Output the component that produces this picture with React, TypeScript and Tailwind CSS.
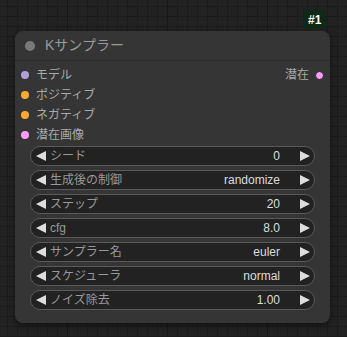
import React from 'react';

type Slot = { label: string; color: string };

const inputs: Slot[] = [
  { label: 'モデル', color: 'bg-[#b39ddb]' },
  { label: 'ポジティブ', color: 'bg-[#ffa931]' },
  { label: 'ネガティブ', color: 'bg-[#ffa931]' },
  { label: '潜在画像', color: 'bg-[#ff9cf9]' },
];

const widgets = [
  { name: 'シード', value: '0' },
  { name: '生成後の制御', value: 'randomize' },
  { name: 'ステップ', value: '20' },
  { name: 'cfg', value: '8.0' },
  { name: 'サンプラー名', value: 'euler' },
  { name: 'スケジューラ', value: 'normal' },
  { name: 'ノイズ除去', value: '1.00' },
];

function Arrow({ dir }: { dir: 'left' | 'right' }) {
  return (
    <svg width="10" height="10" viewBox="0 0 10 10" className="shrink-0">
      <path d={dir === 'left' ? 'M10 0 L10 10 L0 5 Z' : 'M0 0 L0 10 L10 5 Z'} fill="#dddddd" />
    </svg>
  );
}

function Widget({ name, value }: { name: string; value: string }) {
  return (
    <div className="flex items-center h-[20px] rounded-full bg-[#222222] border border-[#5a5a5a] pl-[5px] pr-[4px] text-[12px]">
      <Arrow dir="left" />
      <span className="ml-[4px] text-[#999999]">{name}</span>
      <span className="ml-auto text-[#dddddd]">{value}</span>
      <span className="ml-[20px] flex">
        <Arrow dir="right" />
      </span>
    </div>
  );
}

export default function App() {
  return (
    <div
      className="relative w-[347px] h-[337px] overflow-hidden bg-[#222222] bg-[image:linear-gradient(to_right,#171717_1px,transparent_1px),linear-gradient(to_right,#1b1b1b_1px,transparent_1px),linear-gradient(to_bottom,#1b1b1b_1px,transparent_1px)] bg-[size:100px_100px,10px_10px,10px_10px] bg-[position:67px_0,7px_0,0_6px] pt-[31px] pl-[15px]"
      style={{ fontFamily: '"Liberation Sans", "Noto Sans CJK JP", sans-serif' }}
    >
      <div className="absolute left-[303px] top-[10px] h-[19px] px-[5px] rounded-[3px] bg-[#0f2916] text-white text-[12px] font-bold flex items-center">
        #1
      </div>

      <div className="w-[315px] h-[292px] rounded-[8px] bg-[#353535] shadow-[0_2px_6px_rgba(0,0,0,0.5)] flex flex-col">
        <div className="h-[30px] flex items-center border-b border-[#2b2b2b] pl-[10px]">
          <span className="w-[10px] h-[10px] rounded-full bg-[#7a7a7a]" />
          <span className="ml-[10px] text-[14px] text-[#9a9a9a]">Kサンプラー</span>
        </div>

        <div className="pt-[4px] flex flex-col">
          {inputs.map((s, i) => (
            <div key={s.label} className="h-[20px] flex items-center pl-[6px] pr-[6px] text-[12px] text-[#aaaaaa]">
              <span className={`w-[8px] h-[8px] rounded-full ${s.color}`} />
              <span className="ml-[7px]">{s.label}</span>
              {i === 0 && (
                <>
                  <span className="ml-auto">潜在</span>
                  <span className="ml-[6px] w-[9px] h-[9px] rounded-full bg-[#ff9cf9] border border-[#222222]" />
                </>
              )}
            </div>
          ))}
        </div>

        <div className="mt-[1px] px-[15px] flex flex-col gap-[4px]">
          {widgets.map((w) => (
            <Widget key={w.name} name={w.name} value={w.value} />
          ))}
        </div>
      </div>
    </div>
  );
}
